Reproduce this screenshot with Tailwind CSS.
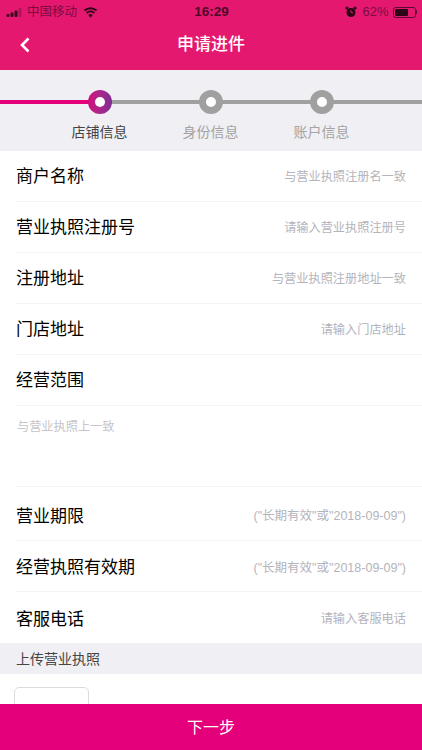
<!DOCTYPE html>
<html lang="en">
<head>
    <meta charset="UTF-8" />
    <title>申请进件</title>
    <script src="https://cdn.jsdelivr.net/npm/@tailwindcss/browser@4"></script>
</head>
<body class="bg-white text-black font-['Liberation_Sans','Noto_Sans_CJK_SC',sans-serif]">
<div class="relative w-[422px] h-[750px] overflow-hidden">

    <!-- status bar + nav -->
    <div class="bg-[#e5186f] h-[70px]">
        <div class="h-[24px] flex items-center justify-between pl-[6px] pr-[5px] text-[12.5px] text-[#6b0a3a]">
            <div class="flex items-center w-[150px]">
                <svg width="17" height="9" viewBox="0 0 17 9" class="mr-[4px]">
                    <rect x="0.5" y="6" width="3" height="3" rx="1" fill="#3a0a20"/>
                    <rect x="4.5" y="4.5" width="3" height="4.5" rx="1" fill="#3a0a20"/>
                    <rect x="8.5" y="2.5" width="3" height="6.5" rx="1" fill="#3a0a20"/>
                    <rect x="12.5" y="0" width="3" height="9" rx="1" fill="#3a0a20" opacity="0.3"/>
                </svg>
                <span class="text-[#7a0c42]">中国移动</span>
                <svg width="15" height="11" viewBox="0 0 16 11" class="ml-[6px]" fill="#2c0616">
                    <path d="M8 11 5.6 8.1a3.6 3.6 0 0 1 4.8 0Z"/>
                    <path d="M4.5 6.9 3.2 5.3a7.2 7.2 0 0 1 9.6 0L11.5 6.9a5.2 5.2 0 0 0-7 0Z"/>
                    <path d="M2.3 4.2.8 2.6a10.6 10.6 0 0 1 14.4 0L13.7 4.2a8.5 8.5 0 0 0-11.4 0Z"/>
                </svg>
            </div>
            <span class="font-semibold text-[#4d0828] text-[13.5px]">16:29</span>
            <div class="flex items-center justify-end w-[150px]">
                <svg width="12" height="12" viewBox="0 0 12 12" class="mr-[5px]" fill="#2c0616">
                    <circle cx="6" cy="6.5" r="4.5"/>
                    <circle cx="2" cy="2" r="1.6"/>
                    <circle cx="10" cy="2" r="1.6"/>
                    <path d="M6 4v2.6h2" stroke="#e5186f" stroke-width="1" fill="none"/>
                </svg>
                <span class="text-[#7a0c42] text-[13px]">62%</span>
                <div class="ml-[4px] w-[23px] h-[11px] rounded-[2.5px] border border-[#5a0a30] p-[1px] flex">
                    <div class="w-[13px] bg-[#2c0616] rounded-[1px]"></div>
                </div>
                <div class="w-[1.5px] h-[4px] bg-[#5a0a30] rounded-r-sm"></div>
            </div>
        </div>
        <div class="relative h-[42px] flex items-center justify-center">
            <svg width="12" height="16" viewBox="0 0 12 16" class="absolute left-[19px] top-[13px]" fill="none" stroke="#fff" stroke-width="2.6">
                <path d="M9.5 1.5 3 8l6.5 6.5"/>
            </svg>
            <span class="text-white text-[17px] font-medium">申请进件</span>
        </div>
    </div>

    <!-- stepper -->
    <div class="bg-[#efeff4] h-[81px] relative">
        <div class="absolute left-0 top-[30px] h-[4px] w-[99px] bg-[#e3007a]"></div>
        <div class="absolute left-[99px] right-0 top-[30px] h-[4px] bg-[#a0a0a0]"></div>
        <div class="flex pl-[44px] pt-[20px]">
            <div class="w-[111px] flex flex-col items-center">
                <div class="relative w-[24px] h-[24px] rounded-full bg-linear-to-r from-[#d4047e] to-[#7f2b94] flex items-center justify-center">
                    <div class="w-[10px] h-[10px] rounded-full bg-white"></div>
                </div>
                <span class="mt-[8px] text-[14px] leading-[20px] text-[#444]">店铺信息</span>
            </div>
            <div class="w-[111px] flex flex-col items-center">
                <div class="relative w-[24px] h-[24px] rounded-full border-[7px] border-[#a0a0a0] bg-white"></div>
                <span class="mt-[8px] text-[14px] leading-[20px] text-[#a3a3a3]">身份信息</span>
            </div>
            <div class="w-[111px] flex flex-col items-center">
                <div class="relative w-[24px] h-[24px] rounded-full border-[7px] border-[#a0a0a0] bg-white"></div>
                <span class="mt-[8px] text-[14px] leading-[20px] text-[#a3a3a3]">账户信息</span>
            </div>
        </div>
    </div>

    <!-- form -->
    <div class="pl-[16px]">
        <div class="h-[51px] pt-[2px] flex items-center justify-between pr-[16px] border-b border-[#f3f3f3]">
            <span class="text-[17px]">商户名称</span>
            <span class="text-[12.2px] text-[#b4b4bb]">与营业执照注册名一致</span>
        </div>
        <div class="h-[51px] pt-[2px] flex items-center justify-between pr-[16px] border-b border-[#f3f3f3]">
            <span class="text-[17px]">营业执照注册号</span>
            <span class="text-[12.2px] text-[#b4b4bb]">请输入营业执照注册号</span>
        </div>
        <div class="h-[51px] pt-[2px] flex items-center justify-between pr-[16px] border-b border-[#f3f3f3]">
            <span class="text-[17px]">注册地址</span>
            <span class="text-[12.2px] text-[#b4b4bb]">与营业执照注册地址一致</span>
        </div>
        <div class="h-[51px] pt-[2px] flex items-center justify-between pr-[16px] border-b border-[#f3f3f3]">
            <span class="text-[17px]">门店地址</span>
            <span class="text-[12.2px] text-[#b4b4bb]">请输入门店地址</span>
        </div>
        <div class="h-[51px] pt-[2px] flex items-center pr-[16px] border-b border-[#f3f3f3]">
            <span class="text-[17px]">经营范围</span>
        </div>
        <div class="h-[81px] pt-[13px] pl-[1px] border-b border-[#f3f3f3] text-[12.2px] leading-[16px] text-[#c4c4ca]">与营业执照上一致</div>
        <div class="h-[54px] pt-[6px] flex items-center justify-between pr-[16px] border-b border-[#f3f3f3]">
            <span class="text-[17px]">营业期限</span>
            <span class="text-[12.5px] text-[#b4b4bb]">("长期有效"或"2018-09-09")</span>
        </div>
        <div class="h-[51px] pt-[4px] flex items-center justify-between pr-[16px] border-b border-[#f3f3f3]">
            <span class="text-[17px]">经营执照有效期</span>
            <span class="text-[12.5px] text-[#b4b4bb]">("长期有效"或"2018-09-09")</span>
        </div>
        <div class="h-[51px] pt-[4px] flex items-center justify-between pr-[16px]">
            <span class="text-[17px]">客服电话</span>
            <span class="text-[12.2px] text-[#b4b4bb]">请输入客服电话</span>
        </div>
    </div>

    <div class="bg-[#efeff4] h-[31px] pl-[16px] pt-[2px] flex items-center text-[14px] text-[#444]">上传营业执照</div>
    <div class="pl-[14px] pt-[13px]">
        <div class="w-[75px] h-[75px] rounded-[5px] border border-[#dcdcdc]"></div>
    </div>

    <!-- bottom button -->
    <div class="absolute left-0 right-0 bottom-0 h-[46px] bg-[#e3007a] flex items-center justify-center text-white text-[16px] pt-[1px]">下一步</div>
</div>
</body>
</html>
